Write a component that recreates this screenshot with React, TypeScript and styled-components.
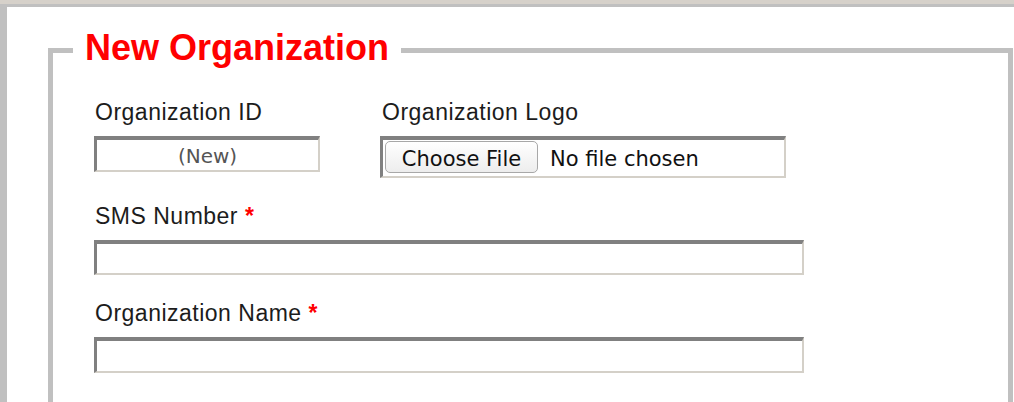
import React from 'react';
import styled, { createGlobalStyle } from 'styled-components';

const GlobalStyle = createGlobalStyle`
  html, body {
    margin: 0;
    padding: 0;
  }
  body {
    background: #fff;
    font-family: "Liberation Sans", Arial, sans-serif;
    overflow: hidden;
  }
`;

const Page = styled.div`
  height: 402px;
  box-sizing: border-box;
  padding-top: 4px;
  background: #d6d1ca;
  overflow: hidden;
`;

const Panel = styled.div`
  height: 100%;
  box-sizing: border-box;
  background: #fff;
  border-top: 3px solid #c0c0c0;
  border-left: 7px solid #c0c0c0;
  padding: 21px 1px 0 41px;
`;

const Fieldset = styled.fieldset`
  margin: 0;
  min-width: 0;
  border: 5px solid #c0c0c0;
  padding: 0 0 80px 20px;
`;

const Legend = styled.legend`
  padding: 0 12px 5px;
  font: bold 36px/40px "Liberation Sans", Arial, sans-serif;
  color: #ff0000;
`;

const FormBody = styled.div`
  display: flex;
  flex-direction: column;
  gap: 24px;
  padding: 25px 0 0 21px;
`;

const Row = styled.div`
  display: flex;
  align-items: flex-start;
  gap: 60px;
`;

const Field = styled.div`
  display: flex;
  flex-direction: column;
  gap: 10px;
`;

const Label = styled.label<{ $indent?: number }>`
  font-size: 23px;
  line-height: 28px;
  letter-spacing: 0.5px;
  color: #1c1c1c;
  padding-left: ${(p) => p.$indent ?? 1}px;
`;

const Required = styled.span`
  color: #ff0000;
  font-weight: bold;
`;

const TextInput = styled.input<{ $width: number; $height?: number }>`
  width: ${(p) => p.$width}px;
  height: ${(p) => p.$height ?? 36}px;
  box-sizing: border-box;
  margin: 0;
  padding: 2px 6px 0;
  border-style: solid;
  border-width: 4px 2px 2px 3px;
  border-color: #808080 #d4d0c8 #d4d0c8 #808080;
  background: #fff;
  font-family: "DejaVu Sans", "Liberation Sans", sans-serif;
  font-size: 20px;
  color: #555;
  text-align: ${(p) => (p.readOnly ? 'center' : 'left')};
  outline: none;
`;

const FileBox = styled.div`
  width: 406px;
  height: 42px;
  box-sizing: border-box;
  display: flex;
  align-items: flex-start;
  padding: 1px 0 0 2px;
  border-style: solid;
  border-width: 4px 2px 2px 3px;
  border-color: #808080 #d4d0c8 #d4d0c8 #808080;
  background: #fff;
  font-family: "DejaVu Sans", "Liberation Sans", sans-serif;
  font-size: 21px;
  color: #111;
`;

const FileButton = styled.button`
  width: 153px;
  height: 32px;
  box-sizing: border-box;
  margin: 0;
  padding: 3px 0 0;
  border: 1px solid #a8a8a8;
  border-radius: 5px;
  background: linear-gradient(#ffffff, #ededed);
  font: inherit;
  color: #111;
`;

const FileName = styled.span`
  margin-left: 12px;
  line-height: 36px;
`;

export default function App() {
  return (
    <Page>
      <GlobalStyle />
      <Panel>
        <Fieldset>
          <Legend>New Organization</Legend>
          <FormBody>
            <Row>
              <Field>
                <Label>Organization ID</Label>
                <TextInput $width={226} readOnly value="(New)" />
              </Field>
              <Field>
                <Label $indent={2}>Organization Logo</Label>
                <FileBox>
                  <FileButton type="button">Choose File</FileButton>
                  <FileName>No file chosen</FileName>
                </FileBox>
              </Field>
            </Row>
            <Field>
              <Label>
                SMS Number <Required>*</Required>
              </Label>
              <TextInput $width={710} $height={35} />
            </Field>
            <Field>
              <Label>
                Organization Name <Required>*</Required>
              </Label>
              <TextInput $width={710} />
            </Field>
          </FormBody>
        </Fieldset>
      </Panel>
    </Page>
  );
}
